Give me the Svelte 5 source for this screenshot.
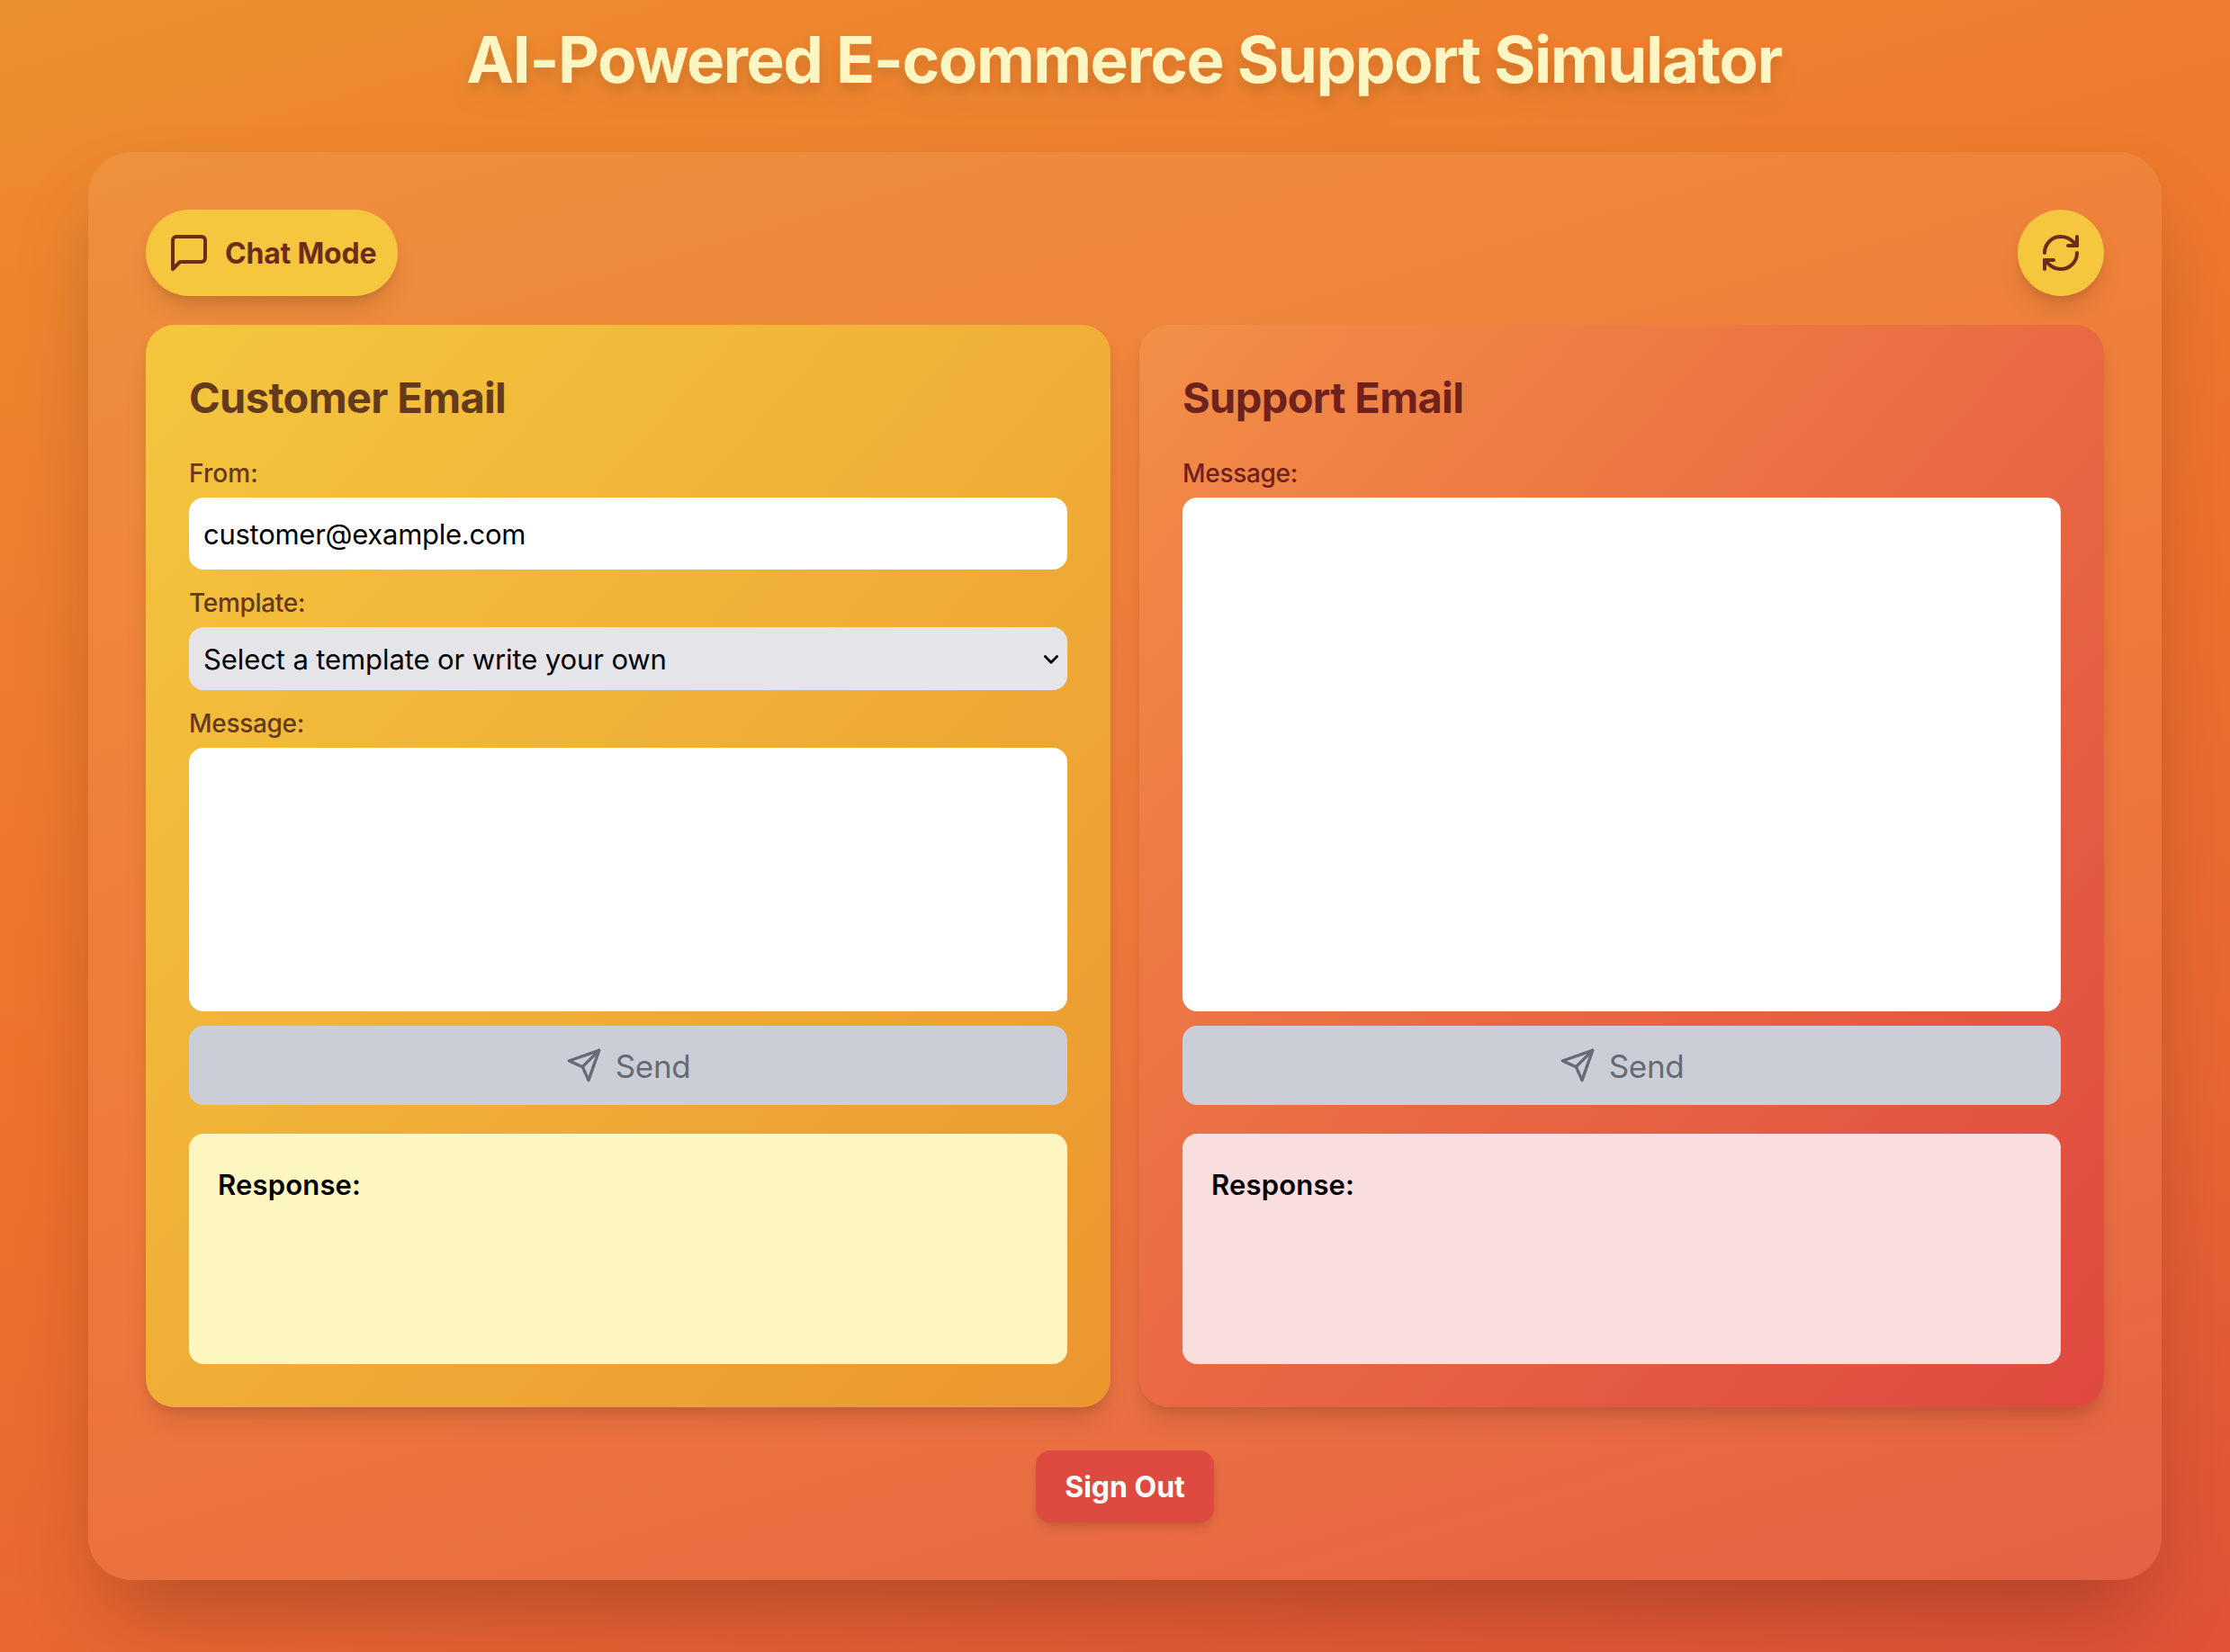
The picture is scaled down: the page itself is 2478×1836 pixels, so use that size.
<script>
  let from = $state('customer@example.com');
  let template = $state('');
  let customerMessage = $state('');
  let supportMessage = $state('');
</script>

{#snippet sendButton()}
  <button class="send" disabled>
    <svg width="40" height="40" viewBox="0 0 24 24" fill="none" stroke="currentColor" stroke-width="2" stroke-linecap="round" stroke-linejoin="round">
      <path d="m22 2-7 20-4-9-9-4Z" />
      <path d="M22 2 11 13" />
    </svg>
    <span>Send</span>
  </button>
{/snippet}

<div class="page">
  <h1>AI-Powered E-commerce Support Simulator</h1>

  <main class="card">
    <div class="toolbar">
      <button class="pill">
        <svg width="48" height="48" viewBox="0 0 24 24" fill="none" stroke="currentColor" stroke-width="2" stroke-linecap="round" stroke-linejoin="round">
          <path d="M21 15a2 2 0 0 1-2 2H7l-4 4V5a2 2 0 0 1 2-2h14a2 2 0 0 1 2 2z" />
        </svg>
        <span>Chat Mode</span>
      </button>
      <button class="pill" aria-label="Reset">
        <svg width="48" height="48" viewBox="0 0 24 24" fill="none" stroke="currentColor" stroke-width="2" stroke-linecap="round" stroke-linejoin="round">
          <path d="M3 12a9 9 0 0 1 9-9 9.75 9.75 0 0 1 6.74 2.74L21 8" />
          <path d="M21 3v5h-5" />
          <path d="M21 12a9 9 0 0 1-9 9 9.75 9.75 0 0 1-6.74-2.74L3 16" />
          <path d="M8 16H3v5" />
        </svg>
      </button>
    </div>

    <div class="panels">
      <section class="panel customer">
        <h2>Customer Email</h2>
        <label for="from">From:</label>
        <input id="from" class="field" type="text" bind:value={from} />
        <label for="template">Template:</label>
        <div class="select">
          <select id="template" class="field" bind:value={template}>
            <option value="">Select a template or write your own</option>
          </select>
          <svg width="18" height="12" viewBox="0 0 18 12" fill="none" stroke="#000" stroke-width="2.8" stroke-linecap="round" stroke-linejoin="round">
            <path d="M2.400 2.400 9 9.200l6.600-6.800" />
          </svg>
        </div>
        <label for="customer-message">Message:</label>
        <textarea id="customer-message" class="field" bind:value={customerMessage}></textarea>
        {@render sendButton()}
        <div class="response"><h3>Response:</h3></div>
      </section>

      <section class="panel support">
        <h2>Support Email</h2>
        <label for="support-message">Message:</label>
        <textarea id="support-message" class="field" bind:value={supportMessage}></textarea>
        {@render sendButton()}
        <div class="response"><h3>Response:</h3></div>
      </section>
    </div>

    <button class="sign-out">Sign Out</button>
  </main>
</div>

<style>
  :global(body) {
    margin: 0;
  }

  .page,
  .page * {
    box-sizing: border-box;
  }

  .page {
    display: flex;
    flex-direction: column;
    height: 1836px;
    padding: 30px 76px 80px 98px;
    overflow: hidden;
    font-family: Inter, 'Liberation Sans', sans-serif;
    background: linear-gradient(164deg, #eb8f2e 0%, #ed862e 11%, #ed702b 52%, #e96632 73%, #e15237 100%);
  }

  h1,
  h2,
  h3 {
    margin: 0;
  }

  h1 {
    margin-bottom: 67px;
    padding-right: 2px;
    font-size: 71px;
    font-weight: 700;
    line-height: 72px;
    letter-spacing: -1.45px;
    text-align: center;
    white-space: nowrap;
    color: #fef6c2;
    filter: drop-shadow(0 20px 16px rgba(0, 0, 0, 0.04)) drop-shadow(0 8px 6px rgba(0, 0, 0, 0.1));
  }

  button,
  .field {
    border: 0;
    margin: 0;
    font-family: inherit;
  }

  .card {
    display: flex;
    flex-direction: column;
    flex: 1;
    padding: 64px;
    border-radius: 48px;
    background: rgba(255, 240, 230, 0.08);
    box-shadow: 0 50px 100px -24px rgba(0, 0, 0, 0.25);
  }

  .toolbar {
    display: flex;
    justify-content: space-between;
    margin-bottom: 32px;
  }

  .pill {
    display: flex;
    align-items: center;
    gap: 16px;
    height: 96px;
    padding: 24px;
    border-radius: 48px;
    font-size: 32px;
    font-weight: 700;
    letter-spacing: -0.2px;
    color: #6d2c1a;
    background: #f5c63e;
    box-shadow:
      0 20px 30px -6px rgba(0, 0, 0, 0.1),
      0 8px 12px -4px rgba(0, 0, 0, 0.1);
  }

  .panels {
    display: grid;
    grid-template-columns: 1fr 1fr;
    gap: 32px;
    flex: 1;
    margin-bottom: 48px;
  }

  .panel {
    display: flex;
    flex-direction: column;
    padding: 48px;
    border-radius: 32px;
    box-shadow:
      0 20px 30px -6px rgba(0, 0, 0, 0.1),
      0 8px 12px -4px rgba(0, 0, 0, 0.1);
  }

  .customer {
    color: #633a1c;
    background: linear-gradient(to bottom right, #f5c63e, #ea962f);
  }

  .support {
    color: #6f211d;
    background: linear-gradient(to bottom right, #f28f46, #e96943 50%, #df4840);
  }

  h2 {
    height: 64px;
    margin-bottom: 32px;
    font-size: 47px;
    line-height: 66px;
    letter-spacing: -0.65px;
  }

  label {
    height: 40px;
    margin-bottom: 8px;
    font-size: 28px;
    font-weight: 500;
    line-height: 42px;
    letter-spacing: -0.3px;
  }

  label[for='from'] {
    letter-spacing: 0.1px;
  }

  .field {
    display: block;
    width: 100%;
    padding: 0 16px;
    border-radius: 16px;
    font-size: 31px;
    color: #000;
    background: #fff;
    outline: none;
    resize: none;
  }

  input.field {
    height: 80px;
    margin-bottom: 16px;
    letter-spacing: -0.27px;
  }

  textarea.field {
    flex: 1;
    margin-bottom: 16px;
  }

  .select {
    display: grid;
    align-items: center;
    height: 70px;
    margin-bottom: 16px;
  }

  .select > * {
    grid-area: 1 / 1;
  }

  .select svg {
    justify-self: end;
    margin: 2px 9px 0 0;
    pointer-events: none;
  }

  select.field {
    height: 70px;
    padding-top: 1px;
    appearance: none;
    letter-spacing: -0.1px;
    background: #e5e4e9;
  }

  .send {
    display: flex;
    align-items: center;
    justify-content: center;
    gap: 15px;
    height: 88px;
    padding: 0;
    margin-bottom: 32px;
    border-radius: 16px;
    font-size: 35px;
    letter-spacing: -0.36px;
    color: #646a76;
    background: #cbced6;
  }

  .send span {
    padding-top: 2px;
  }

  .response {
    height: 256px;
    padding: 32px;
    border-radius: 16px;
    color: #000;
  }

  .customer .response {
    background: #fef6c1;
  }

  .support .response {
    background: #fadede;
  }

  h3 {
    font-size: 31px;
    font-weight: 600;
    line-height: 49px;
    letter-spacing: 0.17px;
  }

  .sign-out {
    align-self: center;
    width: 198px;
    height: 80px;
    padding: 0;
    border-radius: 16px;
    font-size: 32px;
    font-weight: 700;
    color: #fff;
    background: #df4a40;
    box-shadow:
      0 8px 12px -2px rgba(0, 0, 0, 0.1),
      0 4px 8px -4px rgba(0, 0, 0, 0.1);
  }
</style>
